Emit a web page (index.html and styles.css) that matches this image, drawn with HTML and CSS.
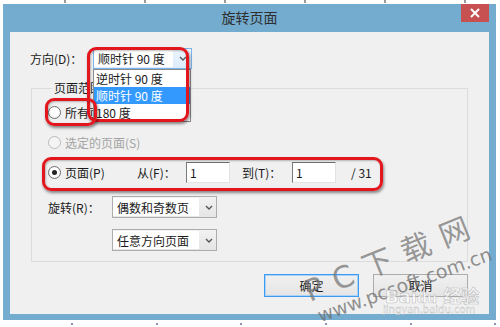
FILE: index.html
```html
<!DOCTYPE html>
<html>
<head>
<meta charset="utf-8">
<link rel="stylesheet" href="styles.css">
</head>
<body>
<div class="screen">
  <div class="window">
    <div class="titlebar">
      <span class="title">旋转页面</span>
      <span class="close"><svg width="10" height="10" viewBox="0 0 10 10"><path d="M1 1L9 9M9 1L1 9" stroke="#fff" stroke-width="2" fill="none"/></svg></span>
    </div>
    <div class="client">
      <div class="dir-row">
        <span class="dir-label">方向(D)：</span>
        <div class="combo combo-dir focused">
          <span class="combo-val">顺时针 90 度</span>
          <span class="combo-arrow"><svg width="8" height="5" viewBox="0 0 8 5"><path d="M1 1L4 4L7 1" stroke="#555" stroke-width="1.4" fill="none"/></svg></span>
        </div>
      </div>

      <fieldset class="group">
        <legend>页面范围</legend>
        <div class="row r1">
          <span class="radio"></span><span class="rtext">所有页面(A)</span>
        </div>
        <div class="row r2 disabled">
          <span class="radio"></span><span class="rtext">选定的页面(S)</span>
        </div>
        <div class="row r3">
          <span class="rchoice"><span class="radio checked"></span><span class="rtext">页面(P)</span></span>
          <span class="from-label">从(F)：</span>
          <span class="field">1</span>
          <span class="to-label">到(T)：</span>
          <span class="field">1</span>
          <span class="total">/ 31</span>
        </div>
        <div class="row r4">
          <span class="rot-label">旋转(R)：</span>
          <div class="combo">
            <span class="combo-val">偶数和奇数页</span>
            <span class="combo-arrow"><svg width="8" height="5" viewBox="0 0 8 5"><path d="M1 1L4 4L7 1" stroke="#555" stroke-width="1.4" fill="none"/></svg></span>
          </div>
        </div>
        <div class="row r5">
          <div class="combo">
            <span class="combo-val">任意方向页面</span>
            <span class="combo-arrow"><svg width="8" height="5" viewBox="0 0 8 5"><path d="M1 1L4 4L7 1" stroke="#555" stroke-width="1.4" fill="none"/></svg></span>
          </div>
        </div>
      </fieldset>

      <div class="buttons">
        <span class="btn default">确定</span>
        <span class="btn">取消</span>
      </div>

      <ul class="droplist">
        <li>逆时针 90 度</li>
        <li class="sel">顺时针 90 度</li>
        <li>180 度</li>
      </ul>

      <span class="mark mark1"></span>
      <span class="mark mark2"></span>
      <span class="mark mark3"></span>
    </div>
  </div>
  <div class="dots"></div>

  <span class="wm wm-big">P C 下 载 网</span>
  <span class="wm wm-url">www.pcsoft.com.cn</span>
  <span class="wm wm-baidu">Bai<span class="paw">du</span> 经验</span>
  <span class="wm wm-jy">jingyan.baidu.com</span>
</div>
</body>
</html>
```
FILE: styles.css
```css
* { box-sizing: border-box; }
body {
  margin: 0;
  width: 500px;
  height: 327px;
  overflow: hidden;
  background: #fff;
  font-family: "Noto Sans CJK SC", "Microsoft YaHei", sans-serif;
  font-size: 12px;
  color: #1a1a1a;
}
.screen {
  position: relative;
  width: 500px;
  height: 327px;
  padding: 4px 0 0 3px;
  background:
    repeating-linear-gradient(90deg, transparent 0 64px, #9a9a9a 64px 66px, transparent 66px 80px) 0 0 / 500px 3px no-repeat;
}
.window {
  width: 493px;
  height: 316px;
  background: #74acd0;
  padding: 0 7px 6px;
  display: flex;
  flex-direction: column;
}
.titlebar {
  height: 28px;
  display: grid;
  grid-template-columns: 1fr auto 1fr;
}
.title {
  grid-column: 2;
  align-self: center;
  font-size: 14px;
  color: #2e2e2e;
  margin-top: -2px;
}
.close {
  grid-column: 3;
  justify-self: end;
  align-self: start;
  width: 28px;
  height: 18px;
  background: #c75050;
  display: flex;
  align-items: center;
  justify-content: center;
}
.client {
  flex: 1;
  background: #f0f0f0;
  position: relative;
  padding-top: 16px;
}
.dir-row {
  height: 21px;
  display: flex;
  align-items: center;
  padding-left: 20px;
}
.dir-label { width: 63px; }

.combo {
  width: 105px;
  height: 22px;
  border: 1px solid #acacac;
  background: linear-gradient(#f2f2f2, #e5e5e5);
  display: flex;
  align-items: stretch;
}
.combo-val {
  width: 86px;
  background: #fff;
  margin: 1px 0 1px 0;
  padding-left: 4px;
  display: flex;
  align-items: center;
  white-space: nowrap;
}
.combo-arrow {
  flex: 1;
  display: flex;
  align-items: center;
  justify-content: center;
  padding-left: 2px;
}
.combo-dir {
  width: 99px;
  height: 21px;
}
.combo-dir .combo-val { width: 79px; }
.focused {
  border-color: #7eb4ea;
  background: linear-gradient(#ecf4fc, #dcecfc);
}

.group {
  margin: 11px 0 0 21px;
  width: 437px;
  border: 1px solid #dcdcdc;
  padding: 7px 0 10px 16px;
  min-width: 0;
}
.group legend {
  margin-left: 4px;
  padding: 0 2px;
  line-height: 16px;
  height: 16px;
}
.row {
  display: flex;
  align-items: center;
}
.r1 { height: 18px; }
.r2 { height: 18px; margin-top: 12px; }
.r3 { height: 21px; margin-top: 11px; }
.r4 { height: 22px; margin-top: 13px; }
.r5 { height: 22px; margin-top: 11px; padding-left: 64px; }

.radio {
  width: 13px;
  height: 13px;
  border: 1px solid #6f6f6f;
  border-radius: 50%;
  background: radial-gradient(circle at 50% 40%, #fff 40%, #e9e9e9);
  display: flex;
  align-items: center;
  justify-content: center;
  flex: none;
}
.radio.checked::after {
  content: "";
  width: 5px;
  height: 5px;
  border-radius: 50%;
  background: #222;
}
.rtext { margin-left: 4px; white-space: nowrap; }
.disabled { color: #a3a3a3; }
.disabled .radio {
  border-color: #bcbcbc;
  background: #f4f4f4;
}
.rchoice {
  width: 89px;
  display: flex;
  align-items: center;
}
.from-label { width: 49px; }
.field {
  width: 44px;
  height: 21px;
  background: #fff;
  border: 1px solid #e3e3e3;
  border-top-color: #6e6e6e;
  border-left-color: #7a7a7a;
  padding-left: 3px;
  display: flex;
  align-items: center;
}
.to-label { width: 50px; margin-left: 12px; }
.total { margin-left: 15px; }
.rot-label { width: 64px; }

.buttons {
  margin-top: 12px;
  display: flex;
  justify-content: flex-end;
  gap: 14px;
  padding-right: 21px;
}
.btn {
  width: 95px;
  height: 23px;
  border: 1px solid #acacac;
  background: linear-gradient(#f0f0f0, #e5e5e5);
  display: flex;
  align-items: center;
  justify-content: center;
}
.btn.default {
  border-color: #3c9bf0;
  box-shadow: inset 0 0 0 1px #a9d3f8;
}

.droplist {
  position: absolute;
  left: 83px;
  top: 37px;
  width: 98px;
  margin: 0;
  padding: 0;
  list-style: none;
  background: #fff;
  border: 1px solid #8a8a8a;
}
.droplist li {
  height: 17px;
  line-height: 17px;
  padding-left: 2px;
  white-space: nowrap;
}
.droplist li.sel {
  background: #3399ff;
  color: #fff;
}

.mark {
  position: absolute;
  border: 3px solid #e3161e;
  border-radius: 9px;
  box-shadow: 1px 2px 3px rgba(0, 0, 0, 0.45), inset 1px 1px 2px rgba(0,0,0,0.25);
}
.mark1 { left: 77px; top: 15px; width: 102px; height: 75px; }
.mark2 { left: 35px; top: 66px; width: 52px; height: 28px; }
.mark3 { left: 32px; top: 125px; width: 341px; height: 34px; }

.dots {
  height: 7px;
  background: repeating-linear-gradient(90deg, transparent 0 68px, #8f8fb0 68px 70px, transparent 70px 84.7px) 0 3px / 500px 2px no-repeat;
}

.wm {
  position: absolute;
  white-space: nowrap;
  transform-origin: 0 50%;
  font-family: "DejaVu Sans", "Noto Sans CJK SC", sans-serif;
}
.wm-big {
  left: 305px;
  top: 268px;
  font-size: 30px;
  color: rgba(120, 120, 120, 0.75);
  transform: rotate(-22deg);
  letter-spacing: 1px;
}
.wm-url {
  left: 318px;
  top: 305px;
  font-size: 19px;
  color: rgba(110, 110, 110, 0.75);
  transform: rotate(-20deg);
}
.wm-baidu {
  left: 385px;
  top: 282px;
  font-size: 18px;
  font-weight: bold;
  color: rgba(255, 255, 255, 0.7);
  -webkit-text-stroke: 0.6px rgba(150, 150, 150, 0.6);
}
.paw { font-size: 14px; }
.wm-jy {
  left: 383px;
  top: 304px;
  font-size: 10px;
  color: rgba(255, 255, 255, 0.8);
  -webkit-text-stroke: 0.4px rgba(140, 140, 140, 0.55);
}
```
